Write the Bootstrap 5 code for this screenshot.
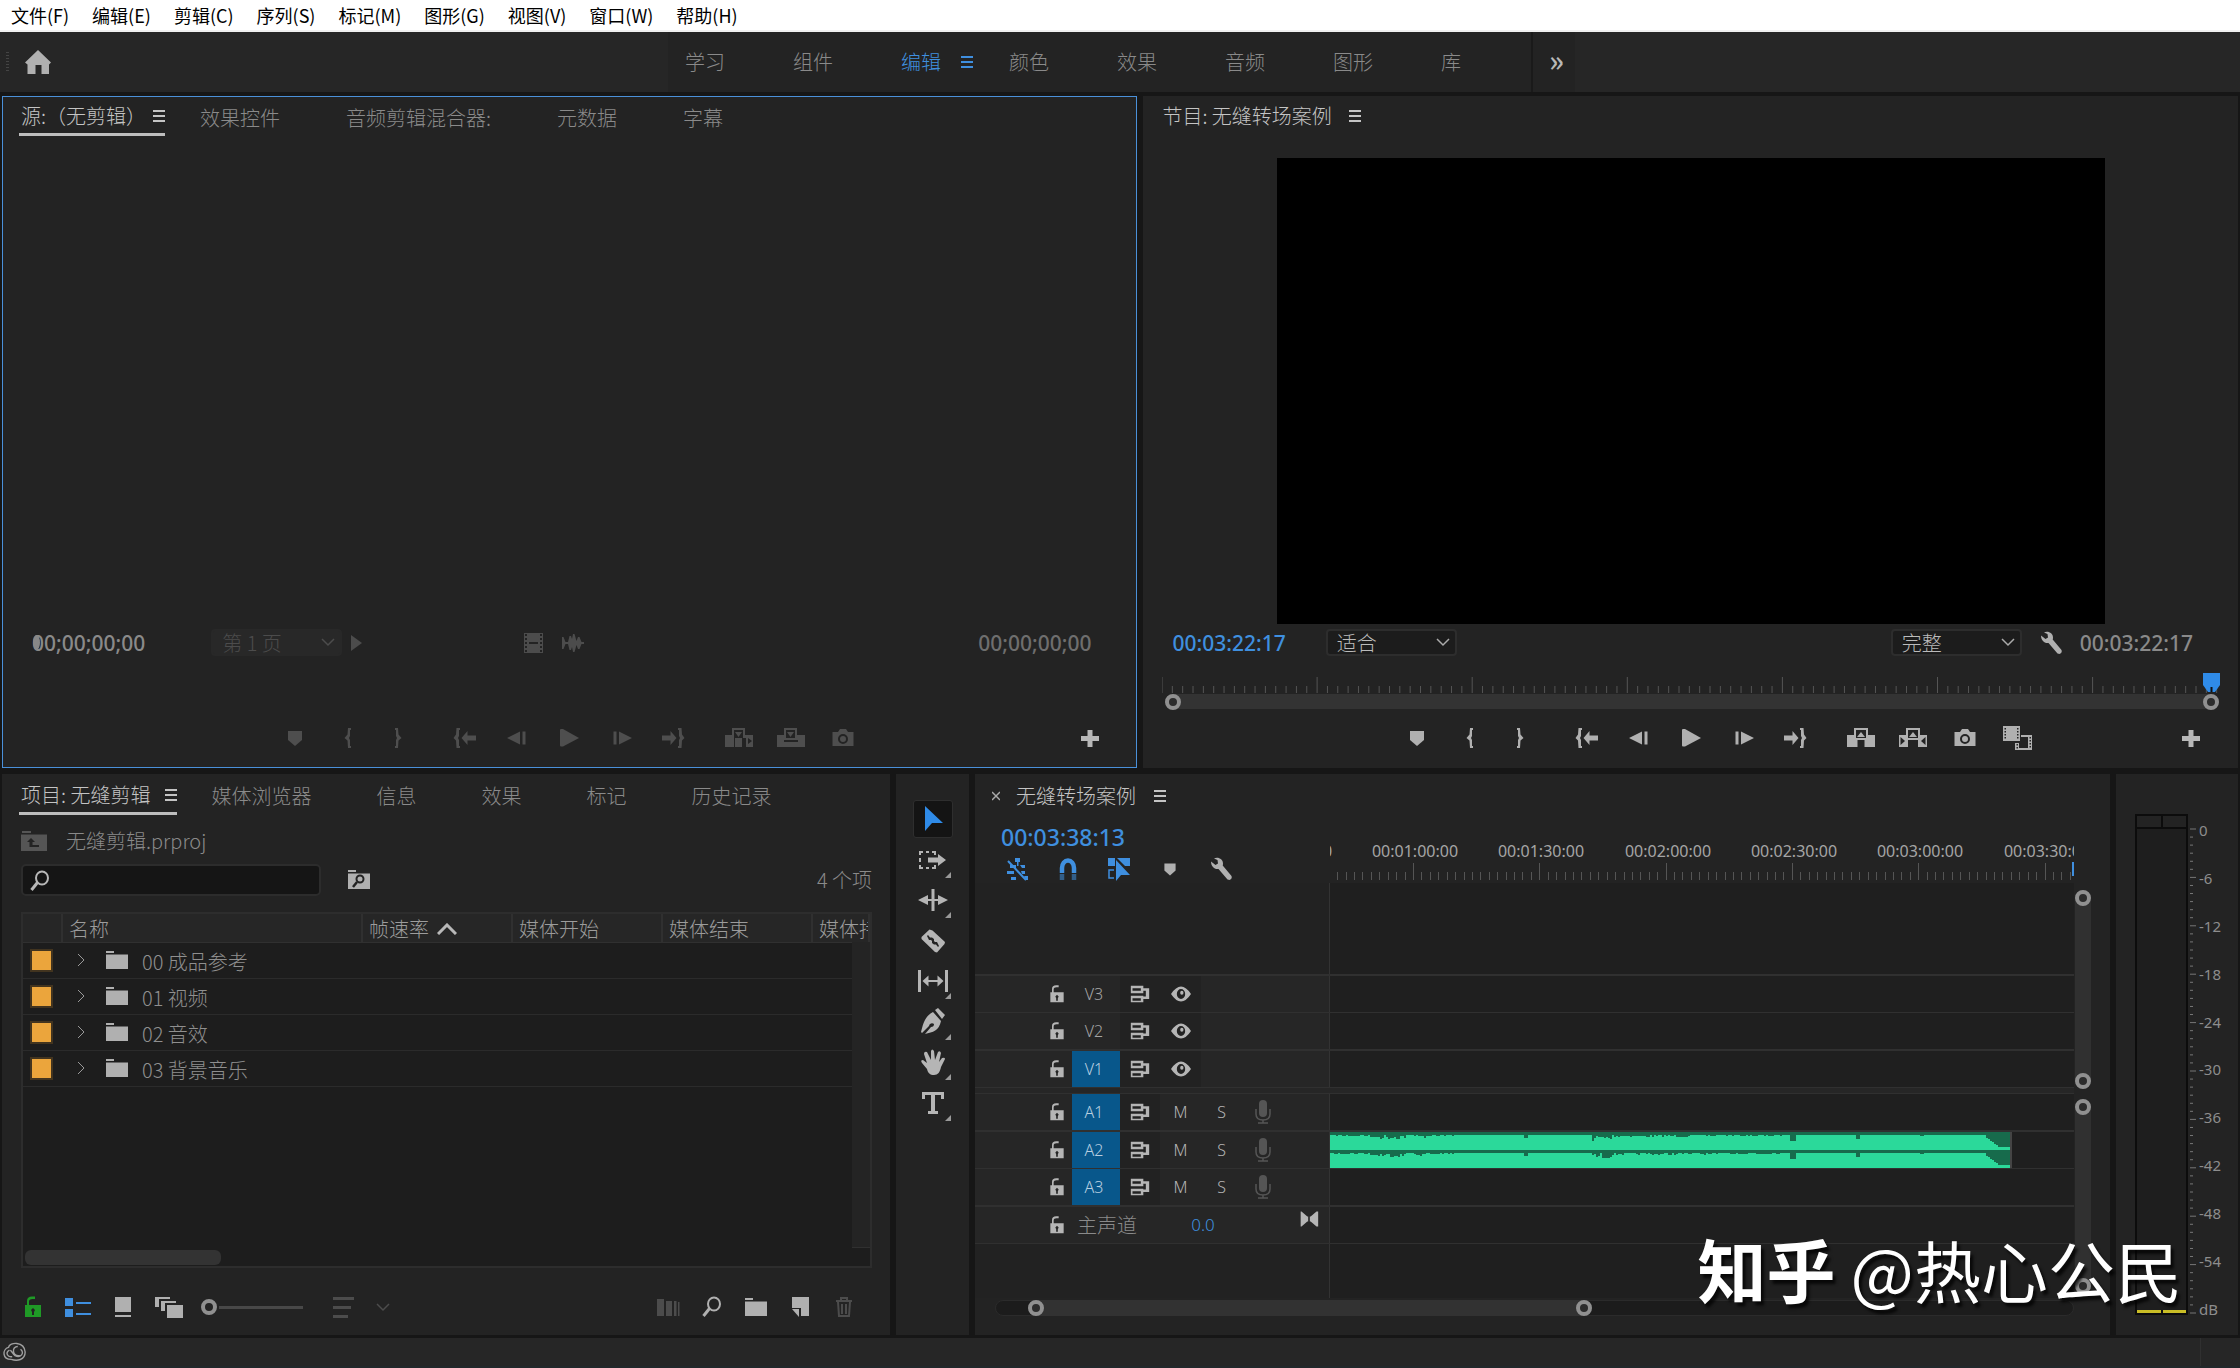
<!DOCTYPE html>
<html lang="zh-CN">
<head>
<meta charset="utf-8">
<meta name="viewport" content="width=device-width, initial-scale=1">
<title>无缝剪辑.prproj</title>
<link href="https://cdn.jsdelivr.net/npm/bootstrap@5.3.0/dist/css/bootstrap.min.css" rel="stylesheet">
<style>
:root{--edge:#161616;--panel:#232323;--line:#303030;--dim:#8a8a8a;--lit:#b8b8b8;--accent:#3f8fdf}
body{font-family:"Noto Sans CJK SC",sans-serif;font-size:20px;font-weight:300;line-height:24px;background:var(--edge);color:var(--dim);overflow:hidden}
button,input,select{font:inherit;color:inherit;background:none;border:0;padding:0}
a{color:inherit;text-decoration:none}
svg{display:block;flex:none}
.ic{width:24px;height:24px;fill:currentColor;stroke:none}
.ln{fill:none;stroke:currentColor}
.menubar{height:32px;background:#fff;border-bottom:2px solid #f0f0f0;color:#000;font-size:18px;font-weight:400;gap:23px;padding:0 11px}
.workspaces{height:60px;background:#262626;margin-bottom:4px}
.ws-home{flex:0 0 668px;padding-left:6px}
.ws-tabs{flex:0 0 863px;min-width:0;background:var(--panel);padding-left:17px}
.ws-tabs a{flex:0 0 108px;gap:20px}
.ws-tabs a:last-child{flex-basis:60px}
.ws-more{flex:0 0 44px;background:var(--panel);border-left:2px solid #1a1a1a;font-size:30px;color:var(--lit);font-weight:500;padding:0 0 6px 16px;text-align:left}
.grip{width:3px;height:20px;background:repeating-linear-gradient(#444 0 1px,transparent 1px 3px)}
.c-home{color:#b0b0b0;margin-left:15px}
.accent{color:var(--accent)}
.burger{width:12px;height:12px;background:linear-gradient(currentColor 0 0) 0 0/12px 2px no-repeat,linear-gradient(currentColor 0 0) 0 5px/12px 2px no-repeat,linear-gradient(currentColor 0 0) 0 10px/12px 2px no-repeat;flex:none}
.row-top{flex:672 1 0;gap:6px;padding:0 2px;min-height:0}
.row-low{flex:561 1 0;gap:6px;padding:6px 2px 3px;min-height:0}
.pane{background:var(--panel);min-width:0;min-height:0}
.monitor{border:1px solid transparent}
.monitor.focused{border-color:#4a90d9}
.src{flex:1136 1 0}.prg{flex:1095 1 0}
.tabs{height:41px;padding:0 16px;gap:64px;white-space:nowrap;flex:none}
.tabs .on{color:#c4c4c4;gap:15px;height:36px;border-bottom:3px solid #bdbdbd;margin-right:-29px;padding:0 0 0 2px}
.src .tabs{gap:66px}
.src .tabs .on{gap:7px;margin-right:-31px}
.tabs .plain{border-color:transparent}
.prg .tabs .on{gap:17px}
.stage{background:#000;aspect-ratio:826/465;margin:20px auto 0;flex:1 1 0;min-height:0}
.tc{font-family:"Noto Sans","Noto Sans CJK SC",sans-serif;font-size:21px;font-weight:500;white-space:nowrap}
.off-t{color:#6e6e6e}
.tcrow{height:37px;flex:none;position:relative}
.tcrow.s{padding:0 45px 0 29px}
.tcrow.p{padding:0 44px 0 28px}
.drop{width:131px;height:27px;position:relative}
.drop select{width:100%;height:100%;appearance:none;background:#1c1c1c;border:2px solid #2d2d2d;border-radius:4px;padding-left:9px;color:#bbb;line-height:22px}
.drop svg{position:absolute;right:7px;top:8px;width:14px;height:10px;fill:none;stroke:#aaa}
.drop.off select{background:#282828;border-color:#282828;color:#4c4c4c;opacity:1}
.drop.off svg{stroke:#4c4c4c}
.off-ink{color:#4c4c4c}
.gap-a{margin-left:66px}.gap-b{margin-left:159px}.gap-c{margin-left:40px}.gap-d{margin-right:17px}
.ghost{position:absolute;left:30px;top:11px;width:7px;height:15px;border-radius:50%;background:#888}
.rulebox{height:48px;flex:none;padding:0 18px;position:relative}
.ticks{width:100%;height:32px}
.bar{height:15px;background:#333;border-radius:8px}
.ring{width:16px;height:16px;border:4px solid #909090;border-radius:50%;background:#2c2c2c;flex:none}
.bar-h{display:flex;justify-content:space-between;align-items:center;margin:1px 0 0 3px}
.head-mark{position:absolute;right:17px;top:12px;width:17px;height:19px}
.transport{height:58px;flex:none;padding-left:247px;color:#b0b0b0;position:relative}
.transport.s{padding-left:266px;color:#4e4e4e}
.transport button{width:52px;height:40px;display:flex;align-items:center;justify-content:center}
.transport .grp{display:flex;margin-right:14px}
.transport .wide{width:32px;height:24px}
.transport .add{margin-left:auto;margin-right:20px;color:#b8b8b8}
.project{flex:888 1 0;display:flex;flex-direction:column}
.crumb{height:46px;padding:0 19px;gap:19px}
.tabs.low{height:44px;padding-left:17px;gap:65px}
.tabs.low .on{margin-right:-31px;height:37px}
.finder{height:32px;padding:0 18px 0 19px;flex:none}
.finder .box{width:300px;height:32px;position:relative}
.finder input{width:100%;height:100%;background:#151515;border:2px solid #2c2c2c;border-radius:5px;padding-left:36px}
.finder .box svg{position:absolute;left:7px;top:5px}
.fq{margin-left:26px}
.bins{margin:16px 18px 0 19px;flex:1;border:2px solid #2d2d2d;background:#1d1d1d;position:relative;min-height:0;overflow:hidden}
.bins table{width:100%;table-layout:fixed;border-collapse:collapse}
.bins th{height:28px;background:#262626;border-right:2px solid #303030;border-bottom:1px solid #303030;font-weight:300;color:#9c9c9c;padding:2px 0 0 6px;overflow:hidden;white-space:nowrap}
.bins td{height:36px;border-bottom:1px solid #2b2b2b;padding:0;color:#8f8f8f}
.w-a{width:39px}.w-b{width:300px}.w-c{width:150px}
.sw{width:23px;height:23px;background:#eba53c;border:2px solid #42341f;margin-left:7px}
.nm{padding:3px 0 0 9px}
.twist{margin:0 20px 0 15px}
.lane-v{position:absolute;right:0;top:28px;bottom:18px;width:18px;background:#242424;border-bottom:1px solid #303030}
.thumb-h{position:absolute;left:2px;bottom:1px;width:196px;height:15px;border-radius:6px;background:#333}
.ptools{height:67px;padding:10px 14px 0 19px;color:#b0b0b0}
.ptools button{margin-right:20px}
.zoomer{appearance:none;width:104px;height:16px;margin:0 27px 0 -2px;background:linear-gradient(#484848 0 0) 18px 7px/84px 3px no-repeat}
.zoomer::-webkit-slider-thumb{appearance:none;width:16px;height:16px;border:4px solid #909090;border-radius:50%;background:#232323}
.tools{flex:0 0 73px;padding-top:26px;color:#b5b5b5}
.toolset{height:322px}
.tools button{width:40px;height:38px;display:flex;align-items:center;justify-content:center;position:relative;border:1px solid transparent;border-radius:3px}
.tools button.cur{background:#141414;border-color:#2e2e2e;color:#2f8be8}
.tools .ic{width:30px;height:30px}
.tools .sub::after{content:"";position:absolute;right:1px;bottom:0;border:3px solid transparent;border-right-color:#999;border-bottom-color:#999}
.timeline{flex:1135 1 0;display:flex;flex-direction:column}
.tl-title{height:44px;padding-left:17px;color:#c4c4c4}
.tl-title .burger{margin-left:18px}
.tl-top{height:65px;flex:none}
.tl-head{flex:0 0 355px}
.tl-code{font-size:23px;padding-left:26px;height:39px;line-height:39px}
.tl-icons{padding-left:30px;gap:27px}
.tl-ruler{flex:1;min-width:0;overflow:hidden;position:relative}
.tl-ruler svg{width:100%;height:64px}
.tl-ruler text{font-family:"Noto Sans",sans-serif;font-size:16px;font-weight:400;fill:#a5a5a5;text-anchor:middle}
.tl-now{position:absolute;right:0;top:44px;width:2px;height:14px;background:var(--accent)}
.tl-end{flex:0 0 36px}
.tl-body{flex:1;min-height:0}
.tracks{flex:1;min-width:0}
.trk{height:37px;display:flex;border-top:1px solid var(--line);flex:none}
.trk.hv{height:38px;border-top-width:2px}
.trk>.hd{flex:0 0 355px;background:#262626;border-right:1px solid #333;display:flex;padding-left:67px;color:#b5b5b5;font-family:"Noto Sans","Noto Sans CJK SC",sans-serif;font-size:16px}
.trk>.ct{flex:1;background:#1f1f1f;min-width:0}
.hd>*{display:flex;align-items:center;justify-content:center;width:41px;height:100%}
.hd>.lk{width:30px}.hd>.tg{width:48px;color:#a5a5a5;padding-right:4px}
.hd>.tg.sel{background:#08578b;color:#b9cfe0}
.hd>.sy{width:40px}.hd>.dk{background:#222}
.hd .ic{width:20px;height:20px}
.hd .mic{width:18px;height:24px;color:#555}
.hd>.mst{width:81px;font-family:"Noto Sans CJK SC",sans-serif;font-size:20px;color:#8a8a8a;justify-content:flex-start;padding-left:5px}
.hd>.lvl{width:80px;color:var(--accent);font-size:17px;padding-left:20px}
.hd>.kf{width:26px;margin-left:63px;padding-bottom:12px}
.fill{background:#1f1f1f;display:flex}
.fill.lead-in{flex:1}
.fill.tail{flex:0 0 55px;border-top:1px solid var(--line)}
.fill>div:first-child{flex:0 0 355px;background:#222;border-right:1px solid #333}
.split{height:6px;border-top:1px solid var(--line);background:#262626;flex:none}
.clip{width:682px;height:36px}
.vs{flex:0 0 36px;padding-left:1px}
.vs>div{width:16px;background:#303030;border-radius:8px;display:flex;flex-direction:column;justify-content:space-between}
.vs-a{flex:1;margin:7px 0 7px}
.vs-b{flex:0 0 195px;margin:3px 0 4px}
.tl-foot{height:37px;flex:none;padding:2px 36px 0 20px}
.tl-scroll{height:16px;background:#1c1c1c;border:1px solid #2b2b2b;border-radius:8px;padding-left:3%}
.tl-thumb{width:54%;height:16px;margin-top:-1px;background:#323232;border-radius:8px;display:flex;justify-content:space-between}
.meters{flex:0 0 122px;padding:40px 0 20px 19px;font-family:"Noto Sans",sans-serif;font-size:15px;font-weight:400;color:#8d8d8d}
.mbox{width:53px;border:2px solid #0c0c0c;background:#1e1e1e}
.mcap{height:13px;border-bottom:2px solid #0c0c0c;background:#232323}
.mcap::before{content:"";display:block;width:2px;height:11px;margin:0 auto;background:#0c0c0c}
.mlow{height:3px;background:linear-gradient(90deg,#c9bd26 0 24px,#111 24px 26px,#c9bd26 26px)}
.mticks{width:6px;margin:15px 0 2px 2px}
.mticks svg{width:6px;height:100%;overflow:visible}
.mnum{margin:6px 0 -4px 3px;line-height:20px}
.status{height:30px;background:#262626;flex:none;padding:0 3px;border-bottom:2px solid #22282b}
.status i{width:1px;height:100%;background:#303030;margin-left:auto;margin-right:36px}
.stamp{position:absolute;right:58px;bottom:59px;line-height:80px;font-size:67px;font-weight:400;color:#fff;text-shadow:3px 4px 3px rgba(0,0,0,.75);white-space:nowrap;pointer-events:none}
.stamp b{font-weight:700;font-size:69px}
</style>
<script src="https://cdn.jsdelivr.net/npm/bootstrap@5.3.0/dist/js/bootstrap.bundle.min.js"></script>
</head>
<body class="d-flex flex-column vh-100 position-relative">
<svg width="0" height="0" class="position-absolute">
<defs>
<symbol id="home" viewBox="0 0 26 24"><path d="M13 0 26 12.500l-2 2V24h-7.500v-9h-6v9H2.500v-9.500l-2.500-2z"/></symbol>
<symbol id="mark" viewBox="0 0 24 24"><path d="M5 5h14v9l-7 6-7-6z"/></symbol>
<symbol id="lbr" viewBox="0 0 24 24"><path d="M13 2h3v2h-1v6l-1 2 1 2v6h1v2h-3l-.500-7.500L9.500 12l3-3.500z"/></symbol>
<symbol id="rbr" viewBox="0 0 24 24"><path d="M11 2H8v2h1v6l1 2-1 2v6H8v2h3l.500-7.500 3-2.500-3-3.500z"/></symbol>
<symbol id="goin" viewBox="0 0 24 24"><path d="M3.500 2H7v2H6v6l-1 2 1 2v6h1v2H3.500L3 14.500.5 12 3 8.500zM8.500 12l6-7v4.500H23v5h-8.500V19z"/></symbol>
<symbol id="goout" viewBox="0 0 24 24"><path d="M20.500 2H17v2h1v6l1 2-1 2v6h-1v2h3.500l.500-7.500 2.500-2.500L21 8.500zM15.500 12l-6-7v4.500H1v5h8.500V19z"/></symbol>
<symbol id="stepb" viewBox="0 0 24 24"><path d="M2 12 15 5.500v13zM17.500 5.500h3v13h-3z"/></symbol>
<symbol id="stepf" viewBox="0 0 24 24"><path d="M23 12 10 5.500v13zM4.500 5.500h3v13h-3z"/></symbol>
<symbol id="play" viewBox="0 0 24 24"><path d="M3 4q0-1 1-1h2l16 9-16 8.500H4q-1 0-1-1z"/></symbol>
<symbol id="ins" viewBox="0 0 32 24"><path fill-rule="evenodd" d="M9 2h13v7h8v12h-7v-9h-4v9h-7v-9h-1v9H2V9h7zm2 2v8h9V4zm1 2h7l-3.500 5zm13 6v6l4-3z"/></symbol>
<symbol id="ovr" viewBox="0 0 32 24"><path fill-rule="evenodd" d="M9 2h13v7h8v12H2V9h7zm2 2v8h9V4zm1 2h7l-3.500 5zM9 14v2h14v-2z"/></symbol>
<symbol id="lift" viewBox="0 0 32 24"><path fill-rule="evenodd" d="M9 2h14v7h7v12H19.500v-7h-7v7H2V9h7zm2 2v8h10V4zm1 7 4-5 4 5z"/></symbol>
<symbol id="extr" viewBox="0 0 32 24"><path fill-rule="evenodd" d="M9 2h14v7h7v12h-9v-7H11v7H2V9h7zm2 2v8h10V4zm1 7 4-5 4 5zM3.500 11v8l4.500-4zm25 0v8L24 15z"/></symbol>
<symbol id="cam" viewBox="0 0 24 24"><path fill-rule="evenodd" d="M1.500 6H7l2-3h6l2 3h5.500v14h-21zM12 8a5 5 0 1 0 0 10 5 5 0 0 0 0-10zm0 2a3 3 0 1 1 0 6 3 3 0 0 1 0-6z"/></symbol>
<symbol id="proxy" viewBox="0 0 32 24"><path fill-rule="evenodd" d="M2 0h17v15H2zm1.500 2v1.500H5V2zm0 3v1.500H5V5zm0 3v1.500H5V8zm0 3v1.500H5V11zM16 2v1.500h1.500V2zm0 3v1.500h1.500V5zm0 3v1.500h1.500V8zm0 3v1.500h1.500V11zM20 9h11v15H14v-7h4v5h9V11h-7zm8.500 2v1.500H30V11zm0 3v1.500H30V14zm0 3v1.500H30V17zm0 3v1.500H30V20zM15.500 18v1.500H17V18zm0 3v1.500H17V21z"/></symbol>
<symbol id="plus" viewBox="0 0 24 24"><path d="M9.500 4h5v6H21v5h-6.500v6h-5v-6H3v-5h6.500z"/></symbol>
<symbol id="film" viewBox="0 0 24 24"><path fill-rule="evenodd" d="M3 2h19v20H3zm5 9v2h9v-2zM4 3v2h2V3zm0 4v2h2V7zm0 4v2h2v-2zm0 4v2h2v-2zm0 4v2h2v-2zM19 3v2h2V3zm0 4v2h2V7zm0 4v2h2v-2zm0 4v2h2v-2zm0 4v2h2v-2z"/></symbol>
<symbol id="wave" viewBox="0 0 24 24"><path d="M1 6h1.500l2 5H7l1.500-6H10l1 3 1-5h1.500l2 7 1.500-4h1.500l2 5H23v2h-2.500l-2 5H17l-1.500-4-2 7H12l-1-5-1 3H8.500L7 13H4.500l-2 5H1z"/></symbol>
<symbol id="wrench" viewBox="0 0 24 24"><path d="M2 4.500 6.500 8 9 6.500 8.500 3 5 1.500C9-.5 14 2 14 6.500c0 1.500-.3 2-.3 2L22.500 19q1 3-2 4l-2-.5L9.500 12C5 12.500 2 9 2 4.500z"/></symbol>
<symbol id="glass" viewBox="0 0 24 24"><path class="ln" d="M9.500 13.500 3.500 21" stroke-width="3"/><ellipse class="ln" cx="14" cy="9" rx="6" ry="6.500" stroke-width="2"/></symbol>
<symbol id="fold" viewBox="0 0 24 24"><path d="M1 3h8v2H1zM1 6.500h22V21H1z"/></symbol>
<symbol id="foldup" viewBox="0 0 26 22"><path fill-rule="evenodd" d="M1 1h9v2H1zM0 4.500h26V21H0zM10 8l-4 4h2.500v5H18v-2h-6.500v-3H14z"/></symbol>
<symbol id="fsearch" viewBox="0 0 24 22"><path d="M1 1h8v2H1zM1 4.500h22V20H1z"/><path d="m10 13-4 5" stroke="#232323" stroke-width="2.500"/><circle cx="13" cy="10" r="3.500" fill="none" stroke="#232323" stroke-width="2"/></symbol>
<symbol id="lock" viewBox="0 0 24 24"><path fill-rule="evenodd" d="M4 10h2V6q0-4.500 5-4.500h3v2.500h-2.500Q8 4 8 6.500V10h12v12H4zm8 3-2 2 1 2v3h2v-3l1-2z"/></symbol>
<symbol id="list" viewBox="0 0 26 20"><path d="M0 1h8v8H0zM0 12h8v8H0zM11 5h15v2H11zM11 16h15v2H11z"/></symbol>
<symbol id="tile" viewBox="0 0 24 24"><path d="M4 2h16v15H4zM4 20h16v2H4z"/></symbol>
<symbol id="stack" viewBox="0 0 28 24"><path d="M0 2h15v2H4v8H0zM6 6h15v2H10v8H6zM12 10h16v13H12z"/></symbol>
<symbol id="sort" viewBox="0 0 24 24"><path d="M1 2h21v3H1zM1 11h18v3H1zM1 20h15v3H1z"/></symbol>
<symbol id="auto" viewBox="0 0 24 24"><path d="M1 4h7v17H1zM10 6h6v15h-6zM18 6h2.500v15H18zM22 7h1.500v14H22z"/></symbol>
<symbol id="newi" viewBox="0 0 24 24"><path d="M4 2h17v19h-8v-8H4zM4 14h7v8z"/></symbol>
<symbol id="trash" viewBox="0 0 24 24"><path class="ln" d="M4 6h16M9 5V3h6v2M6 7l1 14h10l1-14M10 9v10M14 9v10" stroke-width="2"/></symbol>
<symbol id="arrow" viewBox="0 0 30 30"><path d="M7 2 25 19H14L7 27z"/></symbol>
<symbol id="tsel" viewBox="0 0 30 30"><path d="M10 12.500h10V9l8 6-8 6v-3.500H10z"/><path class="ln" d="M2 10V7h3M8 7h3M14 7h3v3M2 13v4M2 20v3h3M8 23h3M14 23h3v-3" stroke-width="2"/></symbol>
<symbol id="ripple" viewBox="0 0 30 30"><path d="M13.500 4h3v22h-3zM0 15l10-5v4h10v-4l10 5-10 5v-4H10v4z"/></symbol>
<symbol id="razor" viewBox="0 0 30 30"><path fill-rule="evenodd" d="m11.500 3.500 3 1L27 16l-.5 2L19 26.500l-2-.5L3.500 13v-2zM9 10l2 4h2l1 1v2l2 1.500h2l2 2.500 1-1-2-4h-2l-1-1v-2l-2-1.500h-2L10 9z"/></symbol>
<symbol id="slip" viewBox="0 0 30 30"><path d="M0 4h3v22H0zM27 4h3v22h-3zM4.500 15l6-5.500V14h9V9.500l6 5.500-6 5.500V16h-9v4.500z"/></symbol>
<symbol id="pen" viewBox="0 0 30 30"><path fill-rule="evenodd" d="m17 3 3-2 7 7-3 4zM15 5l8 9c-2 10-8 11-16 13l6-7q3 0 3-3a3 3 0 0 0-5 2l-7 7-1-1c2-7 3-15 12-20z"/></symbol>
<symbol id="hand" viewBox="0 0 30 30"><path d="M9 22 4 16q-2-3 1-3l4 3L6 7q0-3 3-2l4 8V4q1-3 3 0l1 9 3-8q2-2 3 1l-2 9 3-4q3-1 3 1l-4 8c-1 5-3 8-7 8s-6-2-7-6z"/></symbol>
<symbol id="type" viewBox="0 0 30 30"><path d="M4 4h22v7h-3V7h-6v16h3v3H10v-3h3V7H7v4H4z"/></symbol>
<symbol id="nest" viewBox="0 0 24 24"><path d="M10 1h5v4h-5zM12 5h1.500v4H12zM5 8h6v3H5zM15 8h5v3h-3zM2 14h7v3H2zM14 17h3l-1-3h4v3h-6zM6 20h5v3H6zM19 19h4v4h-2z"/><path class="ln" d="M3 4 21 23" stroke-width="2"/></symbol>
<symbol id="magnet" viewBox="0 0 24 24"><path class="ln" d="M6 16v-5a6 7.500 0 0 1 12 0v5" stroke-width="4.500"/><path d="M3.750 17h4.500v6h-4.500zM15.750 17h4.500v6h-4.500z" opacity=".55"/></symbol>
<symbol id="linked" viewBox="0 0 24 24"><path d="M1 1h7v8H1zM10 1h13v8h-5zM9 3v21l5-6h9z"/><path class="ln" d="M7 13H2v8h5" stroke-width="1.500"/></symbol>
<symbol id="sync" viewBox="0 0 24 24"><path fill-rule="evenodd" d="M1 2h15v3h7v13h-7v4H1v-8h15v1h3V8h-3v3H1zm2 3v3h10V5zm0 12v3h10v-3z"/></symbol>
<symbol id="eye" viewBox="0 0 24 24"><path fill-rule="evenodd" d="M0 12Q6 3 12 3t12 9q-6 9-12 9T0 12zm12-6a5 6 0 1 0 0 12 5 6 0 0 0 0-12zm1 2a2 2.500 0 1 1 0 5 2 2.500 0 0 1 0-5z"/></symbol>
<symbol id="mic" viewBox="0 0 18 24"><rect x="5" y="0" width="8" height="17" rx="4"/><path class="ln" d="M2 9v5q0 6 7 6t7-6V9M9 20v3M4 23h10" stroke-width="1.500"/></symbol>
<symbol id="keyf" viewBox="0 0 24 24"><path d="M2 3h1l7 6h4l7-6h2v18h-2l-7-6h-4l-7 6H2z"/><path d="M12 8v8" stroke="#262626" stroke-width="2"/></symbol>
<symbol id="cc" viewBox="0 0 26 22"><path class="ln" d="M9 19C-1 19-1 8 6 6c1-6 17-7 18 5 0 9-9 10-15 8M7 9c-5 3-2 8 3 7M12 14 8 9M18 15C10 16 9 5 16 5M19 8c5 4 0 10-6 7l-4-5" stroke-width="1.500"/></symbol>
<symbol id="chev" viewBox="0 0 14 10"><path d="m1 2 6 6 6-6" fill="none" stroke-width="1.500"/></symbol>
</defs>
</svg>

<nav class="menubar d-flex align-items-center flex-shrink-0">
<a href="#">文件(F)</a><a href="#">编辑(E)</a><a href="#">剪辑(C)</a><a href="#">序列(S)</a><a href="#">标记(M)</a><a href="#">图形(G)</a><a href="#">视图(V)</a><a href="#">窗口(W)</a><a href="#">帮助(H)</a>
</nav>

<header class="workspaces d-flex flex-shrink-0">
<div class="ws-home d-flex align-items-center"><span class="grip"></span><button class="c-home" aria-label="主页"><svg width="28" height="24" fill="currentColor"><use href="#home"/></svg></button></div>
<nav class="ws-tabs d-flex align-items-center">
<a href="#">学习</a><a href="#">组件</a><a href="#" class="accent d-flex align-items-center">编辑<span class="burger"></span></a><a href="#">颜色</a><a href="#">效果</a><a href="#">音频</a><a href="#">图形</a><a href="#">库</a>
</nav>
<button class="ws-more d-flex align-items-center" aria-label="更多工作区">»</button>
</header>

<div class="row-top d-flex">
<section class="pane monitor focused src d-flex flex-column">
<nav class="tabs d-flex align-items-center"><a href="#" class="on d-flex align-items-center">源:（无剪辑）<span class="burger"></span></a><a href="#">效果控件</a><a href="#">音频剪辑混合器:</a><a href="#">元数据</a><a href="#">字幕</a></nav>
<div class="flex-grow-1"></div>
<div class="tcrow s d-flex align-items-center">
<span class="tc">00;00;00;00</span><span class="ghost"></span>
<div class="drop off gap-a"><select aria-label="页" disabled><option>第 1 页</option></select><svg><use href="#chev"/></svg></div>
<svg class="off-ink ms-2" width="12" height="16" fill="currentColor"><path d="M1 0 12 8 1 16z"/></svg>
<button class="gap-b off-ink" aria-label="仅拖动视频"><svg class="ic"><use href="#film"/></svg></button>
<button class="off-ink ms-3" aria-label="仅拖动音频"><svg class="ic"><use href="#wave"/></svg></button>
<span class="tc ms-auto off-t">00;00;00;00</span>
</div>
<div class="rulebox"></div>
<div class="transport s d-flex align-items-center">
<div class="grp"><button aria-label="添加标记"><svg class="ic"><use href="#mark"/></svg></button><button aria-label="标记入点"><svg class="ic"><use href="#lbr"/></svg></button><button aria-label="标记出点"><svg class="ic"><use href="#rbr"/></svg></button></div>
<div class="grp"><button aria-label="转到入点"><svg class="ic"><use href="#goin"/></svg></button><button aria-label="后退一帧"><svg class="ic"><use href="#stepb"/></svg></button><button aria-label="播放"><svg class="ic"><use href="#play"/></svg></button><button aria-label="前进一帧"><svg class="ic"><use href="#stepf"/></svg></button><button aria-label="转到出点"><svg class="ic"><use href="#goout"/></svg></button></div>
<div class="grp"><button aria-label="插入"><svg class="ic wide"><use href="#ins"/></svg></button><button aria-label="覆盖"><svg class="ic wide"><use href="#ovr"/></svg></button><button aria-label="导出帧"><svg class="ic"><use href="#cam"/></svg></button></div>
<button class="add" aria-label="按钮编辑器"><svg class="ic"><use href="#plus"/></svg></button>
</div>
</section>

<section class="pane monitor prg d-flex flex-column">
<nav class="tabs d-flex align-items-center"><a href="#" class="on plain d-flex align-items-center">节目: 无缝转场案例<span class="burger"></span></a></nav>
<div class="stage"></div>
<div class="tcrow p d-flex align-items-center">
<span class="tc accent">00:03:22:17</span>
<div class="drop gap-c"><select aria-label="缩放级别"><option>适合</option></select><svg><use href="#chev"/></svg></div>
<div class="drop ms-auto gap-d"><select aria-label="回放分辨率"><option>完整</option></select><svg><use href="#chev"/></svg></div>
<button class="gap-d" aria-label="设置"><svg class="ic" color="#b0b0b0"><use href="#wrench"/></svg></button>
<span class="tc">00:03:22:17</span>
</div>
<div class="rulebox"><svg id="prgRuler" class="ticks"></svg><div class="bar bar-h"><span class="ring"></span><span class="ring"></span></div><svg class="head-mark" viewBox="0 0 17 19"><path d="M0 0h17v12l-5 7H5l-5-7z" fill="#2f8be8"/><path d="M8.500 14v5" stroke="#111" stroke-width="2"/></svg></div>
<div class="transport d-flex align-items-center">
<div class="grp"><button aria-label="添加标记"><svg class="ic"><use href="#mark"/></svg></button><button aria-label="标记入点"><svg class="ic"><use href="#lbr"/></svg></button><button aria-label="标记出点"><svg class="ic"><use href="#rbr"/></svg></button></div>
<div class="grp"><button aria-label="转到入点"><svg class="ic"><use href="#goin"/></svg></button><button aria-label="后退一帧"><svg class="ic"><use href="#stepb"/></svg></button><button aria-label="播放"><svg class="ic"><use href="#play"/></svg></button><button aria-label="前进一帧"><svg class="ic"><use href="#stepf"/></svg></button><button aria-label="转到出点"><svg class="ic"><use href="#goout"/></svg></button></div>
<div class="grp"><button aria-label="提升"><svg class="ic wide"><use href="#lift"/></svg></button><button aria-label="提取"><svg class="ic wide"><use href="#extr"/></svg></button><button aria-label="导出帧"><svg class="ic"><use href="#cam"/></svg></button><button aria-label="切换代理"><svg class="ic wide"><use href="#proxy"/></svg></button></div>
<button class="add" aria-label="按钮编辑器"><svg class="ic"><use href="#plus"/></svg></button>
</div>
</section>
</div>

<div class="row-low d-flex">
<section class="pane project">
<nav class="tabs low d-flex align-items-center"><a href="#" class="on d-flex align-items-center">项目: 无缝剪辑<span class="burger"></span></a><a href="#">媒体浏览器</a><a href="#">信息</a><a href="#">效果</a><a href="#">标记</a><a href="#">历史记录</a></nav>
<div class="crumb d-flex align-items-center flex-shrink-0"><svg width="26" height="22" fill="#555"><use href="#foldup"/></svg><span>无缝剪辑.prproj</span></div>
<div class="finder d-flex align-items-center">
<div class="box"><input type="text" aria-label="搜索"><svg class="ic" color="#b8b8b8"><use href="#glass"/></svg></div>
<button class="fq" aria-label="按查询创建新素材箱"><svg width="24" height="22" fill="#b0b0b0"><use href="#fsearch"/></svg></button>
<span class="ms-auto">4 个项</span>
</div>
<div class="bins">
<table>
<thead><tr><th class="w-a"></th><th class="w-b">名称</th><th class="w-c"><span class="d-flex align-items-center gap-2">帧速率 <svg width="20" height="12" viewBox="0 0 20 12"><path d="m1 11 9-9 9 9" fill="none" stroke="#b8b8b8" stroke-width="3"/></svg></span></th><th class="w-c">媒体开始</th><th class="w-c">媒体结束</th><th>媒体持</th></tr></thead>
<tbody id="binRows"></tbody>
</table>
<div class="lane-v"></div><div class="thumb-h"></div>
</div>
<div class="ptools d-flex align-items-center flex-shrink-0">
<button aria-label="项目可写"><svg class="ic" color="#1f9a26"><use href="#lock"/></svg></button>
<button class="accent" aria-label="列表视图"><svg width="26" height="20" fill="currentColor"><use href="#list"/></svg></button>
<button aria-label="图标视图"><svg class="ic"><use href="#tile"/></svg></button>
<button aria-label="自由变换视图"><svg width="28" height="24" fill="currentColor"><use href="#stack"/></svg></button>
<input type="range" class="zoomer" aria-label="图标大小" value="0">
<button class="off-ink" aria-label="排序图标"><svg class="ic"><use href="#sort"/></svg></button>
<svg width="14" height="10" stroke="#4c4c4c"><use href="#chev"/></svg>
<div class="ms-auto d-flex"><button class="off-ink" aria-label="自动匹配序列"><svg class="ic"><use href="#auto"/></svg></button><button aria-label="查找"><svg class="ic"><use href="#glass"/></svg></button><button aria-label="新建素材箱"><svg class="ic"><use href="#fold"/></svg></button><button aria-label="新建项"><svg class="ic"><use href="#newi"/></svg></button><button class="off-ink" aria-label="清除"><svg class="ic"><use href="#trash"/></svg></button></div>
</div>
</section>

<aside class="pane tools">
<div class="toolset d-flex flex-column align-items-center justify-content-between">
<button class="cur" aria-label="选择工具"><svg class="ic"><use href="#arrow"/></svg></button>
<button class="sub" aria-label="向前选择轨道工具"><svg class="ic"><use href="#tsel"/></svg></button>
<button class="sub" aria-label="波纹编辑工具"><svg class="ic"><use href="#ripple"/></svg></button>
<button aria-label="剃刀工具"><svg class="ic"><use href="#razor"/></svg></button>
<button class="sub" aria-label="外滑工具"><svg class="ic"><use href="#slip"/></svg></button>
<button class="sub" aria-label="钢笔工具"><svg class="ic"><use href="#pen"/></svg></button>
<button class="sub" aria-label="手形工具"><svg class="ic"><use href="#hand"/></svg></button>
<button class="sub" aria-label="文字工具"><svg class="ic"><use href="#type"/></svg></button>
</div>
</aside>

<section class="pane timeline">
<div class="tl-title d-flex align-items-center"><button aria-label="关闭"><svg width="8" height="10" viewBox="0 0 8 10"><path d="m0 1 8 8M8 1 0 9" stroke="#aaa" stroke-width="1.500"/></svg></button><span class="ms-3">无缝转场案例</span><span class="burger"></span></div>
<div class="tl-top d-flex">
<div class="tl-head"><div class="tc tl-code accent">00:03:38:13</div>
<div class="tl-icons d-flex"><button class="accent" aria-label="嵌套"><svg class="ic"><use href="#nest"/></svg></button><button class="accent" aria-label="对齐"><svg class="ic"><use href="#magnet"/></svg></button><button class="accent" aria-label="链接选择项"><svg class="ic"><use href="#linked"/></svg></button><button aria-label="添加标记"><svg class="ic" viewBox="-3 -3 30 30" color="#b0b0b0"><use href="#mark" width="24" height="24"/></svg></button><button aria-label="时间轴显示设置"><svg class="ic" color="#b0b0b0"><use href="#wrench"/></svg></button></div></div>
<div class="tl-ruler"><svg id="tlRuler"></svg><span class="tl-now"></span></div>
<div class="tl-end"></div>
</div>
<div class="tl-body d-flex">
<div class="tracks d-flex flex-column" id="tracks"></div>
<div class="vs d-flex flex-column"><div class="vs-a"><span class="ring"></span><span class="ring"></span></div><div class="vs-b"><span class="ring"></span><span class="ring"></span></div></div>
</div>
<div class="tl-foot"><div class="tl-scroll"><div class="tl-thumb"><span class="ring"></span><span class="ring"></span></div></div></div>
</section>

<section class="pane meters d-flex">
<div class="mbox d-flex flex-column"><div class="mcap"></div><div class="flex-grow-1"></div><div class="mlow"></div></div>
<div class="mticks"><svg id="mTicks"></svg></div>
<div class="mnum d-flex flex-column justify-content-between"><span>0</span><span>-6</span><span>-12</span><span>-18</span><span>-24</span><span>-30</span><span>-36</span><span>-42</span><span>-48</span><span>-54</span><span>dB</span></div>
</section>
</div>

<footer class="status d-flex align-items-center"><svg width="24" height="22" color="#a0a0a0"><use href="#cc"/></svg><i></i></footer>
<div class="stamp"><b>知乎</b> @热心公民</div>

<script>
const icon=(n,c='ic')=>`<svg class="${c}"><use href="#${n}"/></svg>`;

// project bins
document.getElementById('binRows').innerHTML=['00 成品参考','01 视频','02 音效','03 背景音乐'].map(n=>
`<tr><td><div class="sw"></div></td><td colspan="5"><div class="d-flex align-items-center"><svg class="twist" width="8" height="14" viewBox="0 0 8 14"><path d="m1 1 6 6-6 6" fill="none" stroke="#999"/></svg><svg width="24" height="24" class="me-1" fill="#b0b0b0"><use href="#fold"/></svg><span class="nm">${n}</span></div></td></tr>`).join('');

// waveform: [start, end, depth] dips below the top of each channel
function wave(){
  const dips=[[4,40,1],[40,46,2],[48,74,4],[84,94,3],[96,122,1],[194,196,3],[261,280,6],[281,360,2],[370,386,2],[395,452,1],[459,465,6],[525,528,4],[590,592,1]];
  let seed=7;const rnd=()=>(seed=seed*16807%2147483647)/2147483647;
  const ch=y0=>{let d=`M0 ${y0+15}`;
    for(let x=0;x<681;x+=2){let h=0;
      for(const [a,b,k] of dips)if(x>=a&&x<=b)h=Math.round(k*(b-a<8?1:rnd()));
      if(x>=655)h=Math.min(12,2+Math.round((x-655)*.75));
      d+=`V${y0+h}H${x+2}`;}
    return d+`V${y0+15}z`;};
  return `<svg class="clip" viewBox="0 0 682 36"><path d="M0 0h681v36H0z" fill="#176b4c"/><path d="${ch(3)}${ch(21)}" fill="#2bd99a"/><path d="M681 0v36" stroke="#444" stroke-width="2"/></svg>`;
}
const track=(n,kind,heavy,sel)=>`<div class="trk ${heavy?'hv':''}"><div class="hd"><button class="lk" aria-label="锁定">${icon('lock')}</button><button class="tg ${sel?'sel':''}">${n}</button><button class="sy dk" aria-label="同步锁定">${icon('sync')}</button>${kind==='v'?`<button class="dk" aria-label="切换轨道输出">${icon('eye')}</button>`:`<button>M</button><button>S</button><button aria-label="画外音录制">${icon('mic','ic mic')}</button>`}</div><div class="ct">${n==='A2'?wave():''}</div></div>`;
document.getElementById('tracks').innerHTML='<div class="fill lead-in"><div></div></div>'
 +track('V3','v',1,0)+track('V2','v',0,0)+track('V1','v',1,1)+'<div class="split"></div>'
 +track('A1','a',0,1)+track('A2','a',1,1)+track('A3','a',0,1)
 +`<div class="trk hv"><div class="hd"><button class="lk" aria-label="锁定">${icon('lock')}</button><span class="mst">主声道</span><span class="lvl">0.0</span><button class="kf" aria-label="关键帧">${icon('keyf')}</button></div><div class="ct"></div></div>`
 +'<div class="fill tail"><div></div></div>';

// program ruler: fifteen minor steps to each major one
let s='';
for(let i=0;i<=102;i++){const x=(i*14.68/15).toFixed(3)+'%';s+=`<line x1="${x}" x2="${x}" y1="${i%15?25:16}" y2="32" stroke="#555"/>`;}
document.getElementById('prgRuler').innerHTML=s;

// sequence ruler
s='';
const names=['00:00:30:00','00:01:00:00','00:01:30:00','00:02:00:00','00:02:30:00','00:03:00:00','00:03:30:00'];
names.forEach((n,i)=>{const x0=83+126.3*(i-1);
  s+=`<text x="${Math.round(x0)+2}" y="39">${n}</text>`;
  for(let k=0;k<15;k++){const x=Math.round(x0+k*8.42)+.5;s+=`<line x1="${x}" x2="${x}" y1="${k?54:45}" y2="62" stroke="#555"/>`;}});
document.getElementById('tlRuler').innerHTML=s;

// meter scale, one tick per decibel
s='';
for(let i=0;i<=60;i++){const y=(i/60*100).toFixed(2)+'%';s+=`<line x1="0" x2="${i%6?3:6}" y1="${y}" y2="${y}" stroke="#777"/>`;}
document.getElementById('mTicks').innerHTML=s;
</script>
</body>
</html>
